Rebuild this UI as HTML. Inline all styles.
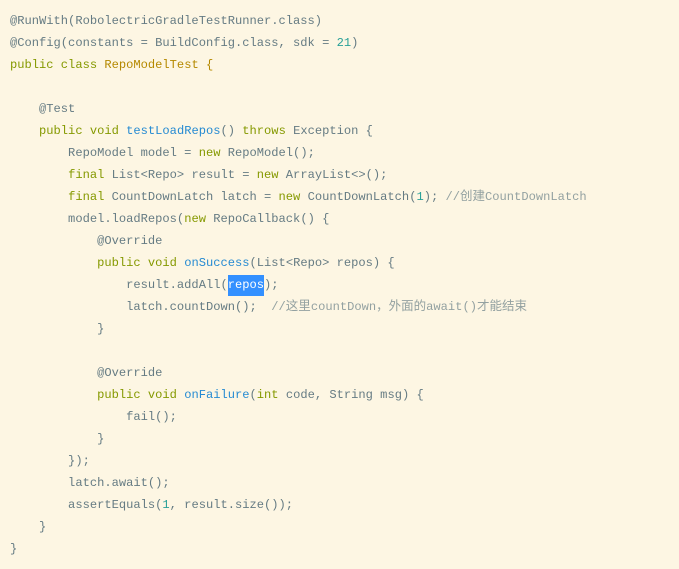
<!DOCTYPE html>
<html><head><meta charset="utf-8"><style>
html,body{margin:0;padding:0;background:#fdf6e3;}
body{width:679px;height:569px;overflow:hidden;position:relative;}
pre{margin:0;position:absolute;left:10px;top:10px;font-family:"Liberation Mono","Noto Sans CJK SC",monospace;font-size:12.1px;line-height:22px;color:#657b83;white-space:pre;}
.k{color:#859900}.c{color:#b58900}.f{color:#268bd2}.n{color:#2aa198}.m{color:#93a1a1}
.z{font-size:12.5px}
.s{background:#3390ff;color:#fff;padding:3px 0 4px;}
</style></head><body><pre>@RunWith(RobolectricGradleTestRunner.class)
@Config(constants = BuildConfig.class, sdk = <span class="n">21</span>)
<span class="k">public class</span> <span class="c">RepoModelTest {</span>

    @Test
    <span class="k">public void</span> <span class="f">testLoadRepos</span>() <span class="k">throws</span> Exception {
        RepoModel model = <span class="k">new</span> RepoModel();
        <span class="k">final</span> List&lt;Repo&gt; result = <span class="k">new</span> ArrayList&lt;&gt;();
        <span class="k">final</span> CountDownLatch latch = <span class="k">new</span> CountDownLatch(<span class="n">1</span>); <span class="m">//<span class="z">创建</span>CountDownLatch</span>
        model.loadRepos(<span class="k">new</span> RepoCallback() {
            @Override
            <span class="k">public void</span> <span class="f">onSuccess</span>(List&lt;Repo&gt; repos) {
                result.addAll(<span class="s">repos</span>);
                latch.countDown();  <span class="m">//<span class="z">这里</span>countDown<span class="z">，外面的</span>await()<span class="z">才能结束</span></span>
            }

            @Override
            <span class="k">public void</span> <span class="f">onFailure</span>(<span class="k">int</span> code, String msg) {
                fail();
            }
        });
        latch.await();
        assertEquals(<span class="n">1</span>, result.size());
    }
}</pre></body></html>
